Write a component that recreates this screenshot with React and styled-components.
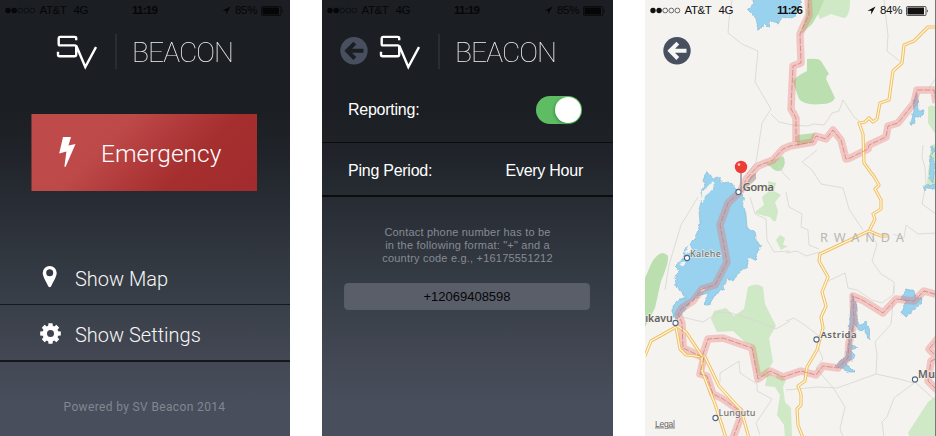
import React from "react";
import styled, { createGlobalStyle } from "styled-components";

const GlobalStyle = createGlobalStyle`
  * { box-sizing: border-box; }
  body { margin: 0; background: #fff; overflow: hidden; }
`;

const Gallery = styled.main`
  display: grid;
  grid-template-columns: 290px 291px 291px;
  column-gap: 32px;
  width: 936px;
  height: 436px;
  font-family: "Liberation Sans", sans-serif;
`;

const Screen = styled.section`
  display: flex;
  flex-direction: column;
  height: 436px;
  overflow: hidden;
  color: #fff;
  background: linear-gradient(#1b1e22 0, #1b1e22 110px, #20242a 155px, #2b3038 220px, #363c45 285px, #424753 355px, #484e5b 405px, #484e5b 436px);
`;

const MapScreen = styled(Screen)`
  display: grid;
  grid-template: 436px / 291px;
  background: #f4f3ef;
`;

const StatusBar = styled.div`
  display: flex;
  align-items: center;
  height: 21px;
  flex: none;
  padding-left: 5px;
  font-size: 11.5px;
  line-height: 21px;
  color: ${(p) => (p.$light ? "#111" : "#050607")};
  svg { display: block; flex: none; }
`;
const Carrier = styled.span`
  width: 34px;
  margin-left: 3.5px;
  white-space: nowrap;
  letter-spacing: -0.4px;
`;
const Clock = styled.b`
  width: 89.5px;
  font-weight: 700;
  font-size: 11.5px;
  letter-spacing: -0.75px;
  margin-left: 43.5px;
`;
const Network = styled.span`
  width: 15px;
  letter-spacing: -0.4px;
`;
const Charge = styled.span`
  width: 25.5px;
  margin-left: 4.5px;
  letter-spacing: -0.3px;
`;

function Status({ time, charge, light }) {
  return (
    <StatusBar $light={light}>
      <svg width="31" height="9" viewBox="0 0 31 9">
        {[3, 9.1, 15.2, 21.3, 27.4].map((x, i) => (
          <circle key={x} cx={x} cy="4.5" r={i < 2 ? 2.7 : 2.4} fill={i < 2 ? "currentColor" : "none"} stroke="currentColor" strokeWidth={i < 2 ? 0 : 0.6} />
        ))}
      </svg>
      <Carrier>AT&amp;T</Carrier>
      <Network>4G</Network>
      <Clock>{time}</Clock>
      <svg width="9" height="9" viewBox="0 0 9 9"><path d="M8.5.5.5 4.8h3.7v3.7Z" fill="currentColor" /></svg>
      <Charge>{charge}</Charge>
      <svg width="23" height="10" viewBox="0 0 23 10">
        <rect x=".5" y=".5" width="19.5" height="9" rx="1" fill="none" stroke="currentColor" strokeWidth=".7" />
        <rect x="1.5" y="1.5" width="16.5" height="7" fill="currentColor" />
        <path d="M21 3.2q1.6 1.8 0 3.6Z" fill="currentColor" />
      </svg>
    </StatusBar>
  );
}

const Header = styled.header`
  display: flex;
  flex: none;
  align-items: flex-start;
  height: 61px;
  padding: 12px 0 0 ${(p) => (p.$back ? "18px" : "56px")};
  > svg { flex: none; }
`;
const Divider = styled.i`
  width: 2px;
  height: 35px;
  margin: 1px 0 0 18px;
  background: #2a2d32;
`;
const Title = styled.h1`
  margin: 3px 0 0 15px;
  font: 100 28.2px/33px Roboto, sans-serif;
  letter-spacing: -0.95px;
  color: #f2f2f2;
  will-change: opacity;
`;
const BackSlot = styled.span`
  width: 39px;
  padding-top: 4px;
  svg { display: block; }
`;

function BackIcon({ disc = "#484f5e", arrow = "#1b1e22" }) {
  return (
    <svg width="28" height="28" viewBox="0 0 28 28">
      <circle cx="14" cy="13.7" r="13.7" fill={disc} />
      <path d="M14.8 6.1 7.2 13.8 14.8 21.500M7.500 13.800H23.500" fill="none" stroke={arrow} strokeWidth="4" strokeLinejoin="miter" />
    </svg>
  );
}

function Brand({ back }) {
  return (
    <Header $back={back}>
      {back && <BackSlot><BackIcon /></BackSlot>}
      <svg width="41" height="37" viewBox="0 0 41 37">
        <path d="M20.2 7.2V5Q20.2 3.9 18.5 3.9H3.8Q2.7 3.9 2.7 5.2V11Q2.7 12.4 4 12.4H18.8Q20.2 12.4 20.2 13.8V21.5Q20.2 23.2 18.5 23.2H3.5Q2 23.2 2 21.8V18.7M20.3 12.8 29.3 34 40 14" fill="none" stroke="#fff" strokeWidth="2.4" />
      </svg>
      <Divider />
      <Title>BEACON</Title>
    </Header>
  );
}

const EmergencyButton = styled.button`
  display: flex;
  align-items: center;
  flex: none;
  width: 226px;
  height: 77px;
  margin: 32px 0 0 31px;
  padding: 0 0 1px 27px;
  border: 0;
  border-left: 1px solid #773638;
  color: #fff;
  background: linear-gradient(135deg, #be4b49 0%, #be4949 34%, #a52e2f 69%, #a22c2d 100%);
  font: 300 24.4px/32px Roboto, sans-serif;
  letter-spacing: 0.05px;
  span { margin-left: 25px; padding-top: 4px; }
`;

const MenuRow = styled.div`
  display: flex;
  align-items: center;
  flex: none;
  height: ${(p) => p.$height}px;
  padding: 0 0 ${(p) => p.$lift || 0}px 40px;
  border-bottom: ${(p) => p.$line}px solid #15171b;
  font: 300 20px/26px Roboto, sans-serif;
  letter-spacing: 0;
  color: #f7f7f7;
  span { margin-left: 14px; padding-top: 4px; }
`;
const Menu = styled.nav`
  margin-top: 62px;
`;
const Footer = styled.footer`
  margin-top: 36px;
  padding-right: 1px;
  text-align: center;
  font: 400 12px/18px Roboto, sans-serif;
  letter-spacing: 0.36px;
  color: #828791;
`;

function gearPath() {
  const pts = [];
  for (let i = 0; i < 8; i++) {
    [[-17, 8], [-11, 10.5], [11, 10.5], [17, 8]].forEach(([d, r]) => {
      const a = ((i * 45 + d) * Math.PI) / 180;
      pts.push(`${(10.5 + r * Math.sin(a)).toFixed(2)} ${(10.5 - r * Math.cos(a)).toFixed(2)}`);
    });
  }
  return `M${pts.join("L")}ZM10.5 7a3.5 3.5 0 1 0 0 7a3.5 3.5 0 1 0 0-7Z`;
}

function HomeScreen() {
  return (
    <Screen>
      <Status time="11:19" charge="85%" />
      <Brand />
      <EmergencyButton>
        <svg width="17" height="32" viewBox="0 0 17 32"><path d="M4 1h8L9.5 9.5 16.5 8 6.5 31 5.4 30.5 7.4 15.5.2 17.5Z" fill="#fff" /></svg>
        <span>Emergency</span>
      </EmergencyButton>
      <Menu>
        <MenuRow $height={52} $line={1} $lift={4}>
          <svg width="21" height="22" viewBox="0 0 21 22"><path fillRule="evenodd" d="M9.7 0a7 7 0 0 1 7 7c0 3.2-3.4 8.7-5.7 13.5q-1.3 1.5-2.6 0C6.1 15.7 2.7 10.2 2.7 7a7 7 0 0 1 7-7Zm0 3.3a3.5 3.5 0 1 0 0 7a3.5 3.5 0 1 0 0-7Z" fill="#fff" /></svg>
          <span>Show Map</span>
        </MenuRow>
        <MenuRow $height={57} $line={2}>
          <svg width="21" height="23" viewBox="0 -2 21 23"><path fillRule="evenodd" d={gearPath()} fill="#fff" /></svg>
          <span>Show Settings</span>
        </MenuRow>
      </Menu>
      <Footer>Powered by SV Beacon 2014</Footer>
    </Screen>
  );
}

const SettingRow = styled.div`
  display: flex;
  flex: none;
  align-items: center;
  justify-content: space-between;
  height: ${(p) => p.$height}px;
  padding: ${(p) => p.$drop || 0}px 30px ${(p) => p.$lift || 0}px 26px;
  border-bottom: ${(p) => p.$line}px solid #0b0c0e;
  font-size: 16px;
  letter-spacing: -0.25px;
`;
const Switch = styled.span`
  display: flex;
  justify-content: flex-end;
  width: 46px;
  height: 28px;
  margin-right: 1px;
  padding: 1px;
  border-radius: 14px;
  background: #5ebd62;
`;
const Knob = styled.i`
  width: 26px;
  height: 26px;
  border-radius: 50%;
  background: #fff;
  box-shadow: -1px 1px 3px #24702d88;
`;
const Hint = styled.p`
  margin: 29px 0 0;
  text-align: center;
  font-size: 11px;
  line-height: 13px;
  letter-spacing: 0.2px;
  color: #868b94;
`;
const PhoneField = styled.div`
  width: 246px;
  height: 27px;
  margin: 18px 0 0 22px;
  border: 1px solid #585c66;
  border-radius: 4px;
  background: #5a5e68;
  color: #060709;
  text-align: center;
  font-size: 13px;
  line-height: 25px;
`;

function SettingsScreen() {
  return (
    <Screen>
      <Status time="11:19" charge="85%" />
      <Brand back />
      <SettingRow $height={61} $line={1} $lift={4}>
        <span>Reporting:</span>
        <Switch role="switch" aria-checked="true"><Knob /></Switch>
      </SettingRow>
      <SettingRow $height={54} $line={2} $drop={3}>
        <span>Ping Period:</span>
        <span>Every Hour</span>
      </SettingRow>
      <Hint>
        Contact phone number has to be<br />
        in the following format: "+" and a<br />
        country code e.g., +16175551212
      </Hint>
      <PhoneField>+12069408598</PhoneField>
    </Screen>
  );
}

const MapCanvas = styled.svg`
  grid-area: 1 / 1;
  display: block;
  font-family: "Noto Sans", sans-serif;
`;
const MapOverlay = styled.div`
  grid-area: 1 / 1;
  z-index: 1;
  color: #111;
`;
const MapBack = styled.button`
  display: block;
  margin: 16px 0 0 18px;
  padding: 0;
  border: 0;
  background: none;
`;

const borders = [
  "808,-5 809,15 803,27 800,34 801,63 793,66 791,109 796,118 796,142",
  "740,192 747,178 758,166 773,160 783,149 790,146 813,142 816,136 826,139 833,130 841,140 846,159 850,158 868,149 869,145 886,137 888,126 898,123 914,103 917,90 934,90 936,103",
  "740,192 728,203 720,225 727,262 715,285 702,289 693,301 682,308 678,314 682,323 683,348 702,357 708,339 723,338 752,348 758,379 770,371 783,377 801,371 816,375 823,366 838,368 848,358 849,343 854,323 853,296 864,301 883,313 896,299 914,301 924,291 938,295",
  "704,357 700,374 707,376 713,394 723,399 740,411 740,419 733,438",
  "938,338 929,349 938,358 931,361 928,381 938,391",
];
const roads = [
  "938,27 928,27 914,41 904,45 902,63 893,71 889,100 880,103 877,119 873,122 869,118 865,122 859,123 863,134 864,163 875,178 879,185 875,189 881,200 881,209 873,214 875,219 869,231 820,254 819,261 828,277 822,292 826,306 821,317 823,328 817,350 807,367 805,381 798,386 801,394 801,405 797,409 798,425 803,438",
  "869,231 881,236 888,236",
  "645,356 651,341 676,327 680,349 686,355 705,357 719,386 741,410 749,438",
  "676,325 686,332 702,356 702,371 715,404 726,438",
];
const boundaries = [
  "732,0 729,20 728,33 742,44 758,51 755,82 771,109 762,123 758,150 756,162 747,174",
  "771,114 779,122 792,125 807,126 814,124 824,125 829,118 832,113 839,111 843,100 854,117 860,122",
  "884,0 888,36 887,51 902,63",
  "817,150 802,162 812,170 821,184 843,188 849,209 863,230",
  "786,192 789,207 802,214 801,227 808,230 809,245 819,249",
  "786,253 797,251 806,256 820,252",
  "869,231 877,244 872,261 881,274 894,282 894,294",
  "936,78 929,88",
  "923,145 922,157 925,168 926,184 922,204 936,214",
  "936,233 918,234 906,225 904,238 893,234",
  "828,281 845,273 848,288 857,290 872,300 882,303 893,295 894,286",
  "893,303 891,324 875,342 877,354 876,374 854,382 837,388 818,387 786,390",
  "876,374 899,379 914,383 894,398 887,417 882,422 884,437",
  "915,382 936,401",
  "786,321 794,318 806,326 819,336 817,345 823,359 816,368 834,389 845,407 840,429 843,437",
  "750,197 755,214 766,219 767,240 774,252 790,251",
  "682,317 703,322 719,312 731,313 757,321 776,329 790,321",
  "720,382 720,373 739,361 740,373 757,384 757,391 772,399 756,423 760,435",
  "698,197 681,225 669,265 665,290",
  "774,156 783,173 790,180",
];
const cities = [
  [738.5, 192, "Goma", 742.5, 191, 11.5],
  [687, 258, "Kalehe", 690, 256.5, 9],
  [675.5, 323, "ıkavu", 645.2, 321.5, 10.5],
  [715.5, 418, "Lungutu", 718.5, 416, 9],
  [816.5, 339.5, "Astrida", 820.5, 338, 9.5],
  [915, 379.5, "Mu", 918, 378, 10.5],
];
const labelWidths = { Goma: 31.5, Kalehe: 31, "ıkavu": 27.5, Lungutu: 37, Astrida: 36, Mu: 17 };

function MapArt() {
  return (
    <MapCanvas width="291" height="436" viewBox="645 0 291 436" aria-label="Map of Rwanda">
      <defs>
        <filter id="shore" x="-10%" y="-10%" width="120%" height="120%">
          <feTurbulence type="fractalNoise" baseFrequency=".22" numOctaves="2" seed="4" />
          <feDisplacementMap in="SourceGraphic" scale="5" xChannelSelector="R" yChannelSelector="G" colorInterpolationFilters="sRGB" />
        </filter>
      </defs>
      <rect x="645" width="291" height="436" fill="#f4f3f0" />
      <g fill="#cfe8c5">
        <path d="M808 0H850Q850 17 844 18L831 14L820 19L818 14L812 24L801 34L806 16Z" />
        <path fill="#bcdfb0" d="M807 59Q819 58 821 61L829 74Q824 77 828 83L835 98Q832 104 822 104Q805 106 799 99L793 82Q793 78 807 71Z" />
        <path fill="#bcdfb0" d="M766 164L783 156Q787 162 782 170Q776 173 771 167ZM808 0H824L818 14L812 24L801 34L806 16Z" />
        <path fill="#bcdfb0" d="M797 135L815 133L812 142L797 146Z" />
        <path d="M768 181L776 183L774 191L781 195L775 202L778 211L776 221Q773 222 770 217L757 214L755 212L764 205L762 197L768 192Z" />
        <path fill="#bcdfb0" d="M645 291V278L652 262Q661 248 668 256Q669 263 661 281L655 308L645 327Z" />
        <path d="M780 235L785 238L783 245L788 246L781 250L776 240ZM928 107Q932 104 936 107V187H929L927 183L931 145L936 144V135L928 123Z" />
        <path d="M748 287Q756 282 763 287L765 304L776 326L769 338L773 362L767 371L775 378L778 374L786 380L783 387L785 402L791 408L792 437H785L784 425L777 415L780 395L775 387L765 386L767 377L757 376L751 345L745 342L733 331L717 332L711 319L714 311L726 308L734 316L744 309Z" />
        <path d="M936 396L928 402L908 433L910 437H936Z" />
      </g>
      <g fill="none" stroke="#d7d6d1" strokeWidth=".8" strokeLinejoin="round">
        {boundaries.map((p) => <polyline key={p} points={p} />)}
      </g>
      <g filter="url(#shore)" fill="#98d2ee" stroke="#86b6cc" strokeWidth=".6" strokeLinejoin="round">
        <path d="M752 -5L755 5L749 10L754 15L757 20L759 31L764 28L766 25L770 29L772 22L779 24L784 18L790 20L797 17L800 8L806 -5Z" />
        <path d="M708 173L714 180L719 178L724 184L730 183L738 190L746 198L744 204L747 216L748 229L756 232L757 240L762 248L756 256L758 262L750 258L748 268L740 274L734 282L728 280L724 291L716 296L710 306L706 306L709 294L699 297L690 305L684 314L679 320L674 319L674 307L681 300L687 300L682 293L677 287L676 277L681 272L676 267L684 260L687 249L692 244L696 240L701 225L700 211L703 199L702 194L706 187L704 181Z" />
        <path fill="#f4f3f0" d="M714 182L715 190L706 197L705 203L702 201L703 193ZM690 244L694 253L686 255ZM680 265L687 263L684 268ZM702 289L707 290L703 293Z" stroke="none" />
        <path d="M914 104L918 94L919 112L925 112L924 116L918 118L913 127L912 124L915 111ZM853 295L858 308L858 321L861 327L867 323L871 330L870 340L866 334L866 329L861 332L855 325L853 346L858 348L852 352L856 356L854 361H849L847 366L856 373L850 373L843 370L836 367L848 357ZM907 291H915L916 297L923 300V304L908 317L903 315L906 303L902 299Z" />
        <path d="M933 147L936 151L932 157L936 165L934 184L930 180ZM924 187L938 186V190L928 189L926 192Z" />
      </g>
      <g fill="none" strokeLinejoin="round">
        {borders.map((p) => <polyline key={p} points={p} stroke="#ef6965" strokeOpacity=".33" strokeWidth="7.5" />)}
        {roads.map((p) => (
          <g key={p}>
            <polyline points={p} stroke="#f0c066" strokeWidth="3.2" />
            <polyline points={p} stroke="#fff8df" strokeWidth="1.2" />
          </g>
        ))}
        {borders.map((p) => <polyline key={`line-${p}`} points={p} stroke="#c97c7a" strokeWidth=".7" strokeDasharray="6 1.5" />)}
      </g>
      <path d="M741 193L751 176L756 173L756 179L747 188Z" fill="#6d4f4b" opacity=".35" />
      <text x="820" y="241.5" fontSize="12.8" fill="#b8b7b3" textLength="84" lengthAdjust="spacing">RWANDA</text>
      {cities.map(([cx, cy, name, x, y, size]) => (
        <g key={name}>
          <circle cx={cx} cy={cy} r="2.6" fill="#fff" stroke="#526681" strokeWidth="1.1" />
          <text x={x} y={y} fontSize={size} fontWeight={size > 9.2 ? 600 : 500} fill={size > 9.2 ? "#65635f" : "#777570"} stroke="#f4f3ef" strokeWidth="1.5" strokeOpacity=".7" paintOrder="stroke" textLength={labelWidths[name]}>{name}</text>
        </g>
      ))}
      <path d="M741 170V190" stroke="#999" strokeWidth="1.6" />
      <circle cx="741" cy="167" r="6.2" fill="#ef3d35" />
      <circle cx="739" cy="164.6" r="1.3" fill="#ffd3ce" />
      <text x="655" y="426.5" fontFamily="Liberation Sans, sans-serif" fontSize="8.5" fill="#666" textDecoration="underline" textLength="20">Legal</text>
      <path d="M935.5 0V436" stroke="#77787a" />
    </MapCanvas>
  );
}

export default function App() {
  return (
    <>
      <GlobalStyle />
      <Gallery>
        <HomeScreen />
        <SettingsScreen />
        <MapScreen>
          <MapArt />
          <MapOverlay>
            <Status time="11:26" charge="84%" light />
            <MapBack aria-label="Back"><BackIcon arrow="#f7f7f5" /></MapBack>
          </MapOverlay>
        </MapScreen>
      </Gallery>
    </>
  );
}
